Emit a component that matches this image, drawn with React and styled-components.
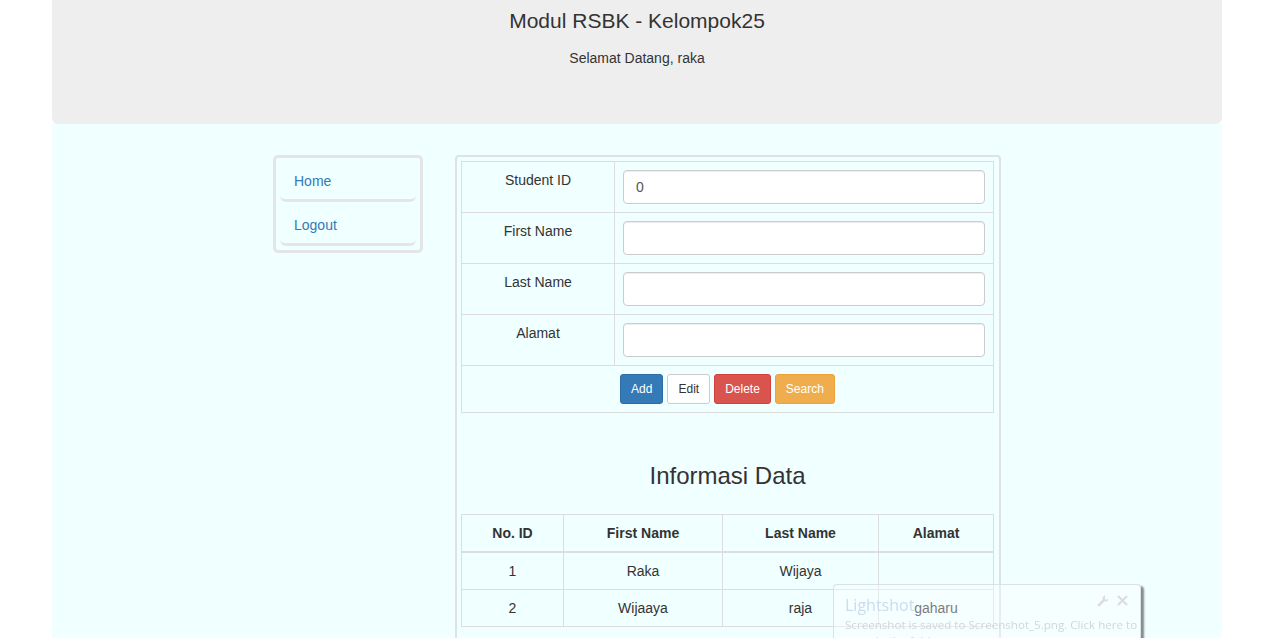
import React from "react";
import styled, { createGlobalStyle } from "styled-components";

const GlobalStyle = createGlobalStyle`
  html, body {
    margin: 0;
    padding: 0;
    background: #fff;
  }
  body {
    font-family: "Liberation Sans", Arial, sans-serif;
    font-size: 14px;
    line-height: 20px;
    color: #333;
    overflow: hidden;
  }
  * {
    box-sizing: border-box;
  }
`;

const Page = styled.div`
  width: 1170px;
  margin-left: 52px;
`;

const Jumbotron = styled.header`
  height: 124px;
  background: #eee;
  border-radius: 0 0 6px 6px;
  text-align: center;
  padding-top: 10px;
`;

const Title = styled.h1`
  margin: 0;
  font-size: 21px;
  line-height: 22px;
  font-weight: 400;
`;

const Welcome = styled.p`
  margin: 16px 0 0;
  font-size: 14px;
  line-height: 20px;
`;

const Content = styled.main`
  background: #f0ffff;
  min-height: 514px;
  padding-top: 31px;
  display: flex;
  justify-content: center;
  align-items: flex-start;
  gap: 32px;
`;

const Sidebar = styled.nav`
  width: 150px;
  border: 3px solid #e4e6e6;
  border-radius: 5px;
  padding: 0 4px 4px;
`;

const NavItem = styled.a`
  display: flex;
  align-items: center;
  height: 44px;
  padding: 4px 0 0 14px;
  color: #337ab7;
  text-decoration: none;
  border-bottom: 3px solid #e4e6e6;
  border-radius: 0 0 6px 6px;
`;

const Panel = styled.section`
  width: 546px;
  border: 2px solid #dde2e2;
  border-radius: 4px;
  padding: 4px 5px 14px 4px;
`;

const Table = styled.table`
  width: 533px;
  border-collapse: collapse;
  border: 1px solid #ddd;
  table-layout: fixed;
`;

const Cell = styled.td`
  border: 1px solid #ddd;
  padding: 8px;
  vertical-align: top;
  text-align: ${(p) => (p.$align || "left")};
`;

const Input = styled.input`
  display: block;
  width: 362px;
  height: 34px;
  padding: 6px 12px;
  font-family: inherit;
  font-size: 14px;
  color: #555;
  background: #fff;
  border: 1px solid #ccc;
  border-radius: 4px;
  box-shadow: inset 0 1px 1px rgba(0, 0, 0, 0.075);
  outline: none;
`;

const ButtonBar = styled.div`
  display: flex;
  justify-content: center;
  gap: 4px;
`;

const palette = {
  primary: { bg: "#337ab7", border: "#2e6da4", color: "#fff" },
  default: { bg: "#fff", border: "#ccc", color: "#333" },
  danger: { bg: "#d9534f", border: "#d43f3a", color: "#fff" },
  warning: { bg: "#f0ad4e", border: "#eea236", color: "#fff" },
};

const Button = styled.button`
  height: 30px;
  padding: 5px 10px;
  font-family: inherit;
  font-size: 12px;
  line-height: 18px;
  border-radius: 3px;
  border: 1px solid ${(p) => palette[p.$kind].border};
  background: ${(p) => palette[p.$kind].bg};
  color: ${(p) => palette[p.$kind].color};
  cursor: pointer;
`;

const Heading = styled.h3`
  margin: 50px 0 25px;
  font-size: 24px;
  line-height: 26px;
  font-weight: 400;
  text-align: center;
`;

const Th = styled.th`
  border: 1px solid #ddd;
  border-bottom: 2px solid #ddd;
  padding: 8px;
  font-weight: 700;
  text-align: center;
`;

const Td = styled.td`
  border: 1px solid #ddd;
  padding: 8px;
  text-align: center;
`;

const Toast = styled.div`
  position: fixed;
  left: 833px;
  top: 584px;
  width: 308px;
  height: 70px;
  padding: 8px 0 0 11px;
  background: rgba(255, 255, 255, 0.35);
  border: 1px solid rgba(205, 215, 215, 0.7);
  border-radius: 4px;
  box-shadow: 3px 2px 2px rgba(0, 0, 0, 0.45);
  font-family: "Open Sans", "Noto Sans", sans-serif;
`;

const ToastTitle = styled.div`
  font-size: 16px;
  line-height: 24px;
  color: #c9dcef;
`;

const ToastText = styled.div`
  font-size: 11.6px;
  line-height: 16px;
  color: #d2d6d6;
  width: 294px;
`;

const ToastIcons = styled.div`
  position: absolute;
  right: 12px;
  top: 10px;
  display: flex;
  gap: 8px;
  color: #dcdcdc;
`;

const fields = ["Student ID", "First Name", "Last Name", "Alamat"];

const rows = [
  { id: 1, first: "Raka", last: "Wijaya", alamat: "" },
  { id: 2, first: "Wijaaya", last: "raja", alamat: "gaharu" },
];

export default function App() {
  return (
    <>
      <GlobalStyle />
      <Page>
        <Jumbotron>
          <Title>Modul RSBK - Kelompok25</Title>
          <Welcome>Selamat Datang, raka</Welcome>
        </Jumbotron>
        <Content>
          <Sidebar>
            <NavItem href="#">Home</NavItem>
            <NavItem href="#">Logout</NavItem>
          </Sidebar>
          <Panel>
            <Table>
              <colgroup>
                <col style={{ width: 153 }} />
                <col />
              </colgroup>
              <tbody>
                {fields.map((f, i) => (
                  <tr key={f}>
                    <Cell $align="center">{f}</Cell>
                    <Cell>
                      <Input defaultValue={i === 0 ? "0" : ""} />
                    </Cell>
                  </tr>
                ))}
                <tr>
                  <Cell colSpan={2}>
                    <ButtonBar>
                      <Button $kind="primary">Add</Button>
                      <Button $kind="default">Edit</Button>
                      <Button $kind="danger">Delete</Button>
                      <Button $kind="warning">Search</Button>
                    </ButtonBar>
                  </Cell>
                </tr>
              </tbody>
            </Table>
            <Heading>Informasi Data</Heading>
            <Table>
              <colgroup>
                <col style={{ width: 102 }} />
                <col style={{ width: 159 }} />
                <col style={{ width: 156 }} />
                <col />
              </colgroup>
              <thead>
                <tr>
                  <Th>No. ID</Th>
                  <Th>First Name</Th>
                  <Th>Last Name</Th>
                  <Th>Alamat</Th>
                </tr>
              </thead>
              <tbody>
                {rows.map((r) => (
                  <tr key={r.id}>
                    <Td>{r.id}</Td>
                    <Td>{r.first}</Td>
                    <Td>{r.last}</Td>
                    <Td>{r.alamat}</Td>
                  </tr>
                ))}
              </tbody>
            </Table>
          </Panel>
        </Content>
      </Page>
      <Toast>
        <ToastIcons>
          <svg width="12" height="12" viewBox="0 0 12 12" fill="currentColor">
            <path d="M8.5 0.5a3 3 0 0 0-2.8 4L0.8 9.4a1 1 0 0 0 0 1.4l0.4 0.4a1 1 0 0 0 1.4 0l4.9-4.9a3 3 0 0 0 4-2.8l-1.7 1.2-1.6-0.3-0.3-1.6z" />
          </svg>
          <svg width="11" height="11" viewBox="0 0 11 11" stroke="currentColor" strokeWidth="2">
            <path d="M1 1l9 9M10 1l-9 9" />
          </svg>
        </ToastIcons>
        <ToastTitle>Lightshot</ToastTitle>
        <ToastText>
          Screenshot is saved to Screenshot_5.png. Click here to open in the folder.
        </ToastText>
      </Toast>
    </>
  );
}
